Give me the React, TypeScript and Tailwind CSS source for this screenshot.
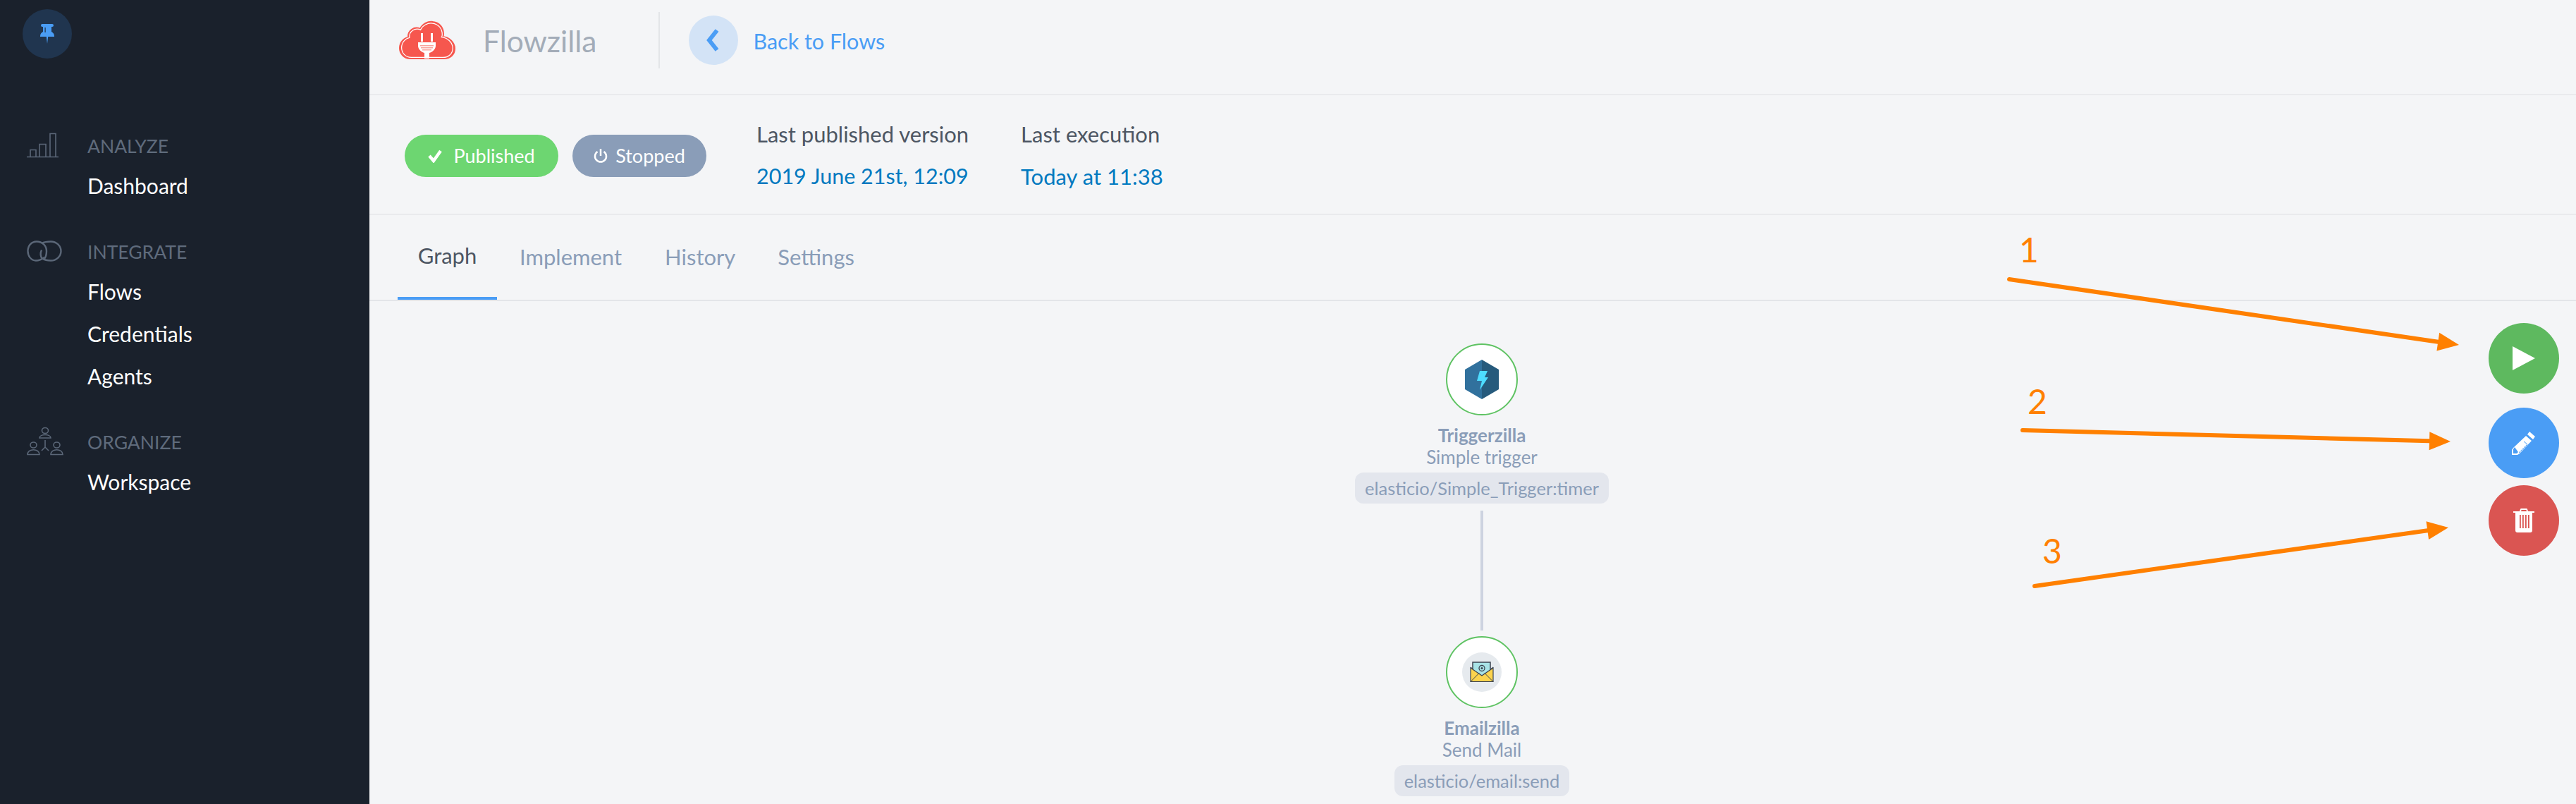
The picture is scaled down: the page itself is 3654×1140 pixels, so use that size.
import React from "react";

const font = "font-['Lato','Noto_Sans',sans-serif]";

function ChartIcon() {
  return (
    <svg width="46" height="36" viewBox="0 0 46 36" fill="none" stroke="#5b6778" strokeWidth="1.600">
      <path d="M0 34.500h45" />
      <path d="M5 34.500v-10h8v10M18 34.500v-18h9v18M33 34.500V1.500h8v33" />
    </svg>
  );
}
function RingsIcon() {
  return (
    <svg width="50" height="30" viewBox="0 0 50 30" fill="none" stroke="#5b6778" strokeWidth="2.400">
      <path d="M25 24c-4 3-8 4.500-12 4.500C6 28.500 1.500 22 1.500 15S6 1.500 14 1.500c8 0 14 6 14 13.500 0 5-1.500 9-3 11" />
      <path d="M21 4c4-2 9-2.500 13-2.500 8 0 14.500 6 14.500 13.500S42 28.500 34 28.500c-6 0-9-1-12-3-3-2.500-3-8-1-12" />
    </svg>
  );
}
function OrgIcon() {
  return (
    <svg width="52" height="41" viewBox="0 0 52 41" fill="none" stroke="#5b6778" strokeWidth="1.600">
      <ellipse cx="26" cy="5.500" rx="4.500" ry="4" />
      <path d="M18 16c0-6 16-6 16 0z" />
      <ellipse cx="9.500" cy="26" rx="4.500" ry="4" />
      <path d="M1 39.500c0-9 17-9 17 0z" />
      <ellipse cx="42.500" cy="26" rx="4.500" ry="4" />
      <path d="M34 39.500c0-9 17-9 17 0z" />
      <path d="M26 19v10M26 29l-5 5M26 29l5 5" />
    </svg>
  );
}
function PinIcon() {
  return (
    <svg width="20" height="28" viewBox="0 0 20 28">
      <path fill="#4a9df5" d="M3 0h14a1.500 1.500 0 0 1 0 4h-1v7c2 1 4 3 4 6v1H11.200L10 28 8.800 18H0v-1c0-3 2-5 4-6V4H3a1.500 1.500 0 0 1 0-4z" />
      <path fill="#1f3044" d="M6.500 5h1.200v7H6.500z" />
    </svg>
  );
}
function CloudLogo() {
  const d = "M16 54C6 54 1 46 1 39c0-8 6-14 12-15-1-10 9-16 17-12 3-7 11-11 18-10 9 1 15 8 15 17 0 2 0 3-1 4 9 1 17 8 17 17 0 8-6 14-15 14z";
  return (
    <svg width="80" height="57" viewBox="0 0 80 57">
      <path d={d} fill="#f6574e" stroke="#f6574e" strokeWidth="2" />
      <path d={d} fill="none" stroke="#ffffff" strokeWidth="1.300" transform="translate(2.700 2.200) scale(.93)" />
      <path fill="#fff" d="M31 18h3v12h-3zM45 18h3v12h-3zM27 31h25v5c0 5-5 9-9 10v8h-7v-8c-4-1-9-5-9-10z" />
      <path fill="#f9a29c" d="M30 35h19v1.500H30zM31 38h17v1.500H31zM33 41h13v1.500H33z" />
    </svg>
  );
}
function Hexagon() {
  return (
    <svg width="48" height="56" viewBox="0 0 48 56">
      <polygon points="24,0 0,14 0,42 24,56" fill="#31719d" />
      <polygon points="24,0 48,14 48,42 24,56" fill="#265a7c" />
      <polygon points="21,16 32,16 28,25 33,25 21,43 24,30 17,30" fill="#4ddcff" />
    </svg>
  );
}
function Envelope() {
  return (
    <svg width="34" height="30" viewBox="0 0 34 30">
      <rect x="4" y="1" width="25" height="22" fill="#a8e3e6" stroke="#3c4450" strokeWidth="1.500" />
      <path d="M1 8l3 2v8M33 8l-3 2v8" fill="none" stroke="#3c4450" strokeWidth="1" />
      <path d="M1 9l16 11L33 9v19.500H1z" fill="#fcd34d" stroke="#3c4450" strokeWidth="1.200" />
      <path d="M1 28.500l12-12M33 28.500l-12-12" stroke="#3c4450" strokeWidth="1" fill="none" />
      <circle cx="17" cy="9.500" r="4" fill="none" stroke="#3c4450" strokeWidth="1.300" />
      <circle cx="17" cy="9.500" r="1.500" fill="#3c4450" />
    </svg>
  );
}

function SideSection({ icon, label, items }: { icon: React.ReactNode; label: string; items: string[] }) {
  return (
    <div className="flex">
      <div className="w-[124px] shrink-0 pl-[38px] h-[50px] flex items-center pb-[5px]">{icon}</div>
      <div className="flex flex-col">
        <div className="h-[50px] flex items-center text-[26.500px] text-[#5f6b7c]">{label}</div>
        {items.map((t) => (
          <div key={t} className="h-[60px] flex items-center text-[30px] text-white">{t}</div>
        ))}
      </div>
    </div>
  );
}

function Node({ icon, name, sub, tag, gray }: { icon: React.ReactNode; name: string; sub: string; tag: string; gray?: boolean }) {
  return (
    <div className="flex flex-col items-center">
      <div className="w-[102px] h-[102px] rounded-full bg-white border-2 border-[#5fc363] flex items-center justify-center">
        {gray ? <div className="w-[56px] h-[56px] rounded-full bg-[#e6eaee] flex items-center justify-center">{icon}</div> : icon}
      </div>
      <div className="mt-[13px] h-[31px] leading-[31px] text-[26px] font-bold text-[#8a9db8]">{name}</div>
      <div className="h-[31px] leading-[31px] text-[26px] text-[#8a9db8]">{sub}</div>
      <div className="mt-[6px] h-[44px] leading-[44px] px-[14px] rounded-[12px] bg-[#e3e6ed] text-[25.500px] text-[#8a9db8]">{tag}</div>
    </div>
  );
}

function Arrow({ x1, y1, x2, y2 }: { x1: number; y1: number; x2: number; y2: number }) {
  const a = Math.atan2(y2 - y1, x2 - x1);
  const len = 30;
  const w = 13;
  const bx = x2 - len * Math.cos(a);
  const by = y2 - len * Math.sin(a);
  const px = -Math.sin(a) * w;
  const py = Math.cos(a) * w;
  return (
    <g>
      <line x1={x1} y1={y1} x2={bx} y2={by} stroke="#ff8000" strokeWidth="6" strokeLinecap="round" />
      <polygon points={`${x2},${y2} ${bx + px},${by + py} ${bx - px},${by - py}`} fill="#ff8000" />
    </g>
  );
}

export default function App() {
  return (
    <div className={`${font} flex w-[3654px] h-[1140px] overflow-hidden bg-[#f4f5f7] relative`}>
      <aside className="w-[524px] shrink-0 bg-[#1a212c] flex flex-col">
        <div className="ml-[32px] mt-[13px] w-[70px] h-[70px] rounded-full bg-[#20354f] flex items-center justify-center">
          <PinIcon />
        </div>
        <div className="mt-[100px] flex flex-col gap-[40px]">
          <SideSection icon={<ChartIcon />} label="ANALYZE" items={["Dashboard"]} />
          <SideSection icon={<RingsIcon />} label="INTEGRATE" items={["Flows", "Credentials", "Agents"]} />
          <SideSection icon={<OrgIcon />} label="ORGANIZE" items={["Workspace"]} />
        </div>
      </aside>

      <main className="flex-1 flex flex-col min-w-0">
        <header className="h-[135px] shrink-0 border-b-2 border-[#e9eaed] flex items-start pl-[42px]">
          <div className="mt-[29px]"><CloudLogo /></div>
          <div className="ml-[39px] mt-[33px] text-[42.500px] leading-[50px] text-[#a3acb8]">Flowzilla</div>
          <div className="ml-[88px] mt-[17px] w-[2px] h-[80px] bg-[#e3e5e8]" />
          <div className="ml-[41px] mt-[22px] w-[70px] h-[70px] rounded-full bg-[#d3e3f6] flex items-center justify-center">
            <svg width="20" height="34" viewBox="0 0 20 34"><path d="M15 3 4 17l11 14" fill="none" stroke="#4a9df5" strokeWidth="6" /></svg>
          </div>
          <div className="ml-[21px] mt-[40px] text-[30.500px] leading-[36px] text-[#4a9df5]">Back to Flows</div>
        </header>

        <section className="h-[170px] shrink-0 border-b-2 border-[#e9eaed] flex items-start pl-[50px]">
          <div className="mt-[56px] h-[60px] w-[218px] rounded-[30px] bg-[#6dd671] flex items-center justify-center gap-[16px] text-white text-[27px]">
            <svg width="20" height="20" viewBox="0 0 20 20"><path d="M2 10l6 7L18 3" fill="none" stroke="#fff" strokeWidth="4.500" /></svg>
            Published
          </div>
          <div className="ml-[20px] mt-[56px] h-[60px] w-[190px] rounded-[30px] bg-[#8a9db8] flex items-center justify-center gap-[11px] text-white text-[27px]">
            <svg width="20" height="22" viewBox="0 0 20 22" fill="none" stroke="#fff" strokeWidth="2.500"><path d="M10 1v10" /><path d="M5.500 5a8 8 0 1 0 9 0" /></svg>
            Stopped
          </div>
          <div className="ml-[71px] mt-[25px] flex flex-col">
            <div className="h-[60px] flex items-center text-[31px] text-[#4d5663]">Last published version</div>
            <div className="h-[60px] flex items-center text-[30.500px] text-[#0079c0]">2019 June 21st, 12:09</div>
          </div>
          <div className="ml-[74px] mt-[25px] flex flex-col">
            <div className="h-[60px] flex items-center text-[31px] text-[#4d5663]">Last execution</div>
            <div className="h-[60px] flex items-center text-[31px] text-[#0079c0]">Today at 11:38</div>
          </div>
        </section>

        <nav className="h-[122px] shrink-0 border-b-2 border-[#e3e5e9] flex pl-[40px] relative">
          <div className="w-[141px] h-[120px] border-b-[4px] border-[#4a9df5] flex items-center justify-center text-[31px] text-[#4d5663] pb-[2px]">Graph</div>
          <div className="ml-[32px] h-[120px] flex items-center text-[31px] text-[#8a9db8] pb-[2px]">Implement</div>
          <div className="ml-[61px] h-[120px] flex items-center text-[31px] text-[#8a9db8] pb-[2px]">History</div>
          <div className="ml-[60px] h-[120px] flex items-center text-[31px] text-[#8a9db8] pb-[2px]">Settings</div>
        </nav>

        <div className="flex-1 relative flex flex-col items-center pl-[26px] pt-[60px] min-h-0">
          <Node icon={<Hexagon />} name="Triggerzilla" sub="Simple trigger" tag="elasticio/Simple_Trigger:timer" />
          <div className="mt-[10px] w-[4px] h-[170px] bg-[#cdd3e0]" />
          <div className="mt-[8px]">
            <Node gray icon={<Envelope />} name="Emailzilla" sub="Send Mail" tag="elasticio/email:send" />
          </div>

          <div className="absolute right-[24px] top-[31px] flex flex-col items-center">
            <button className="w-[100px] h-[100px] rounded-full bg-[#5eb95f] flex items-center justify-center">
              <svg width="32" height="34" viewBox="0 0 32 34"><polygon points="0,0 32,17 0,34" fill="#fff" /></svg>
            </button>
            <button className="mt-[20px] w-[100px] h-[100px] rounded-full bg-[#4a9df5] flex items-center justify-center">
              <svg width="34" height="34" viewBox="0 0 34 34"><path fill="#fff" d="M25 1l8 7-3 4-8-7zM20 7l8 7-17 18-3 2H0v-7l2-3zM4 23l-2 3v6h5l2-2z" /><path d="M17 15l5 4-12 12" stroke="#4a9df5" strokeWidth="1" fill="none" /></svg>
            </button>
            <button className="mt-[10px] w-[100px] h-[100px] rounded-full bg-[#da5552] flex items-center justify-center">
              <svg width="30" height="34" viewBox="0 0 30 34"><path fill="#fff" d="M0 4h9l1-3c0-1 1-1 2-1h6c1 0 2 0 2 1l1 3h9v2h-3v25c0 2-1 3-3 3H6c-2 0-3-1-3-3V6H0zM11 4h8l-.600-2h-6.800z" /><path fill="#da5552" d="M9 9h1.800v19H9zM13 9h1.800v19H13zM17 9h1.800v19H17zM21 9h1.800v19H21z" /></svg>
            </button>
          </div>
        </div>
      </main>

      <svg className="absolute left-0 top-0 pointer-events-none" width="3654" height="1140">
        <Arrow x1={2850} y1={396} x2={3488} y2={489} />
        <Arrow x1={2869} y1={610} x2={3476} y2={626} />
        <Arrow x1={2886} y1={831} x2={3473} y2={748} />
      </svg>
      <div className="absolute left-[2864px] top-[326px] text-[48px] leading-[56px] text-[#ff8000]">1</div>
      <div className="absolute left-[2876px] top-[541px] text-[48px] leading-[56px] text-[#ff8000]">2</div>
      <div className="absolute left-[2897px] top-[753px] text-[48px] leading-[56px] text-[#ff8000]">3</div>
    </div>
  );
}
